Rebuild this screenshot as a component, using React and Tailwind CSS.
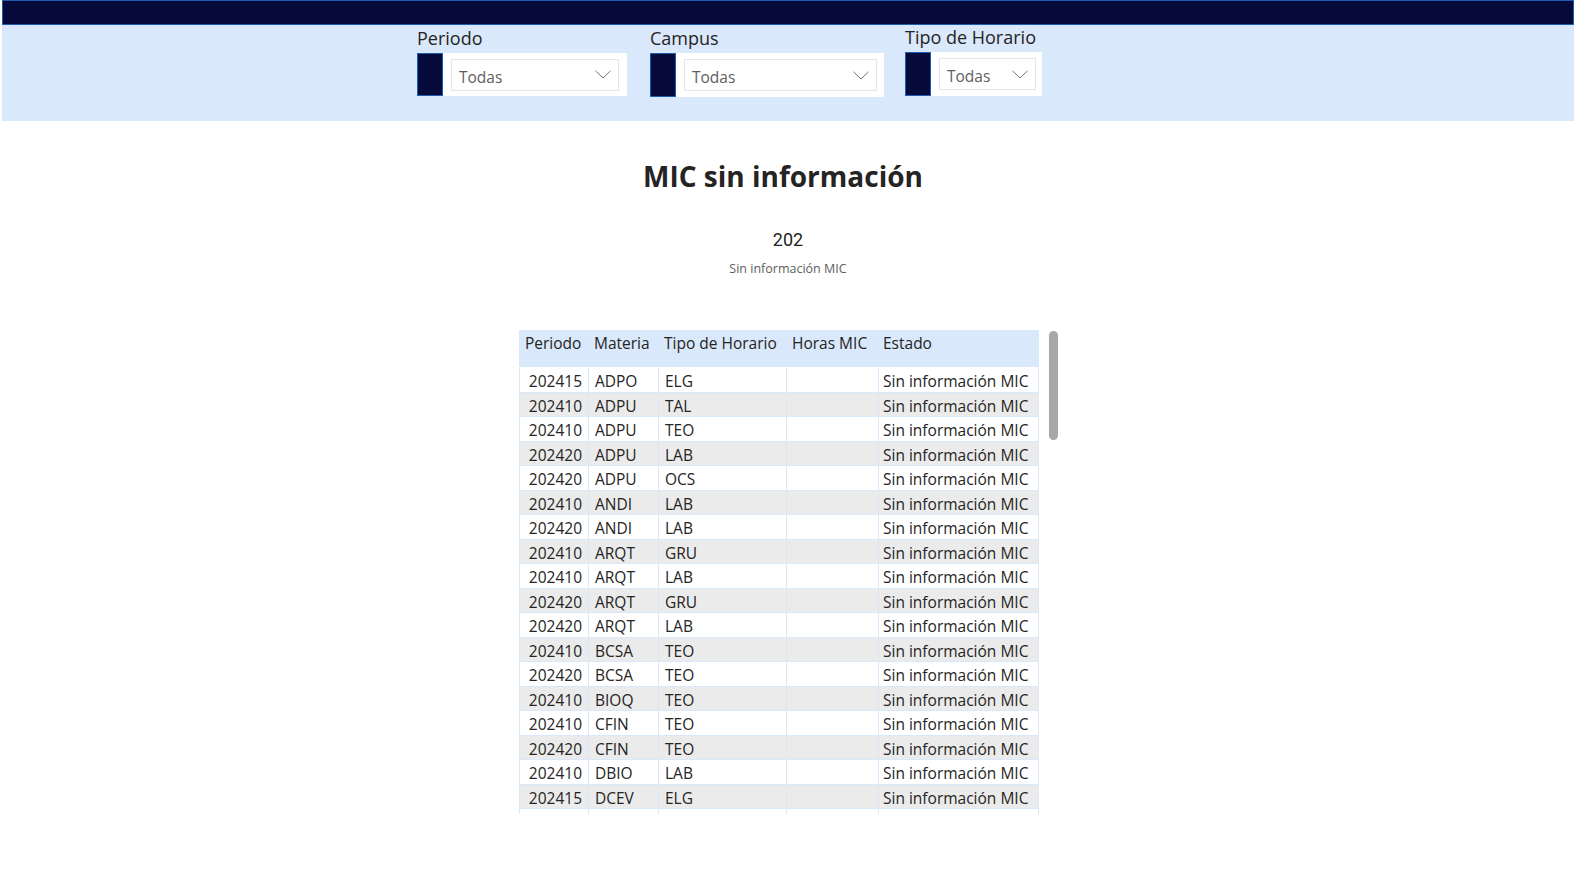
import React from 'react';

const rows = [
  ['202415', 'ADPO', 'ELG'],
  ['202410', 'ADPU', 'TAL'],
  ['202410', 'ADPU', 'TEO'],
  ['202420', 'ADPU', 'LAB'],
  ['202420', 'ADPU', 'OCS'],
  ['202410', 'ANDI', 'LAB'],
  ['202420', 'ANDI', 'LAB'],
  ['202410', 'ARQT', 'GRU'],
  ['202410', 'ARQT', 'LAB'],
  ['202420', 'ARQT', 'GRU'],
  ['202420', 'ARQT', 'LAB'],
  ['202410', 'BCSA', 'TEO'],
  ['202420', 'BCSA', 'TEO'],
  ['202410', 'BIOQ', 'TEO'],
  ['202410', 'CFIN', 'TEO'],
  ['202420', 'CFIN', 'TEO'],
  ['202410', 'DBIO', 'LAB'],
  ['202415', 'DCEV', 'ELG'],
  ['202420', 'DCEV', 'ELG'],
  ['202410', 'DERE', 'TEO'],
];

const Chevron = () => (
  <svg width="16" height="9" viewBox="0 0 16 9" fill="none" className="shrink-0">
    <path d="M0.5 0.8 L8 8 L15.5 0.8" stroke="#757371" strokeWidth="1" />
  </svg>
);

const Slicer = ({ label, boxW, inner, top }) => (
  <div className="flex flex-col">
    <div className="text-[18px] leading-[22px] text-[#252423]">{label}</div>
    <div className={`flex h-[43px] ${top}`}>
      <div className="w-[26px] h-full bg-[#050a3a] border border-[#1b5cae]" />
      <div className={`bg-white flex items-center pl-[8px] ${inner}`} style={{ width: boxW }}>
        <div className="flex-1 h-[32px] border border-[#e6e6e6] flex items-center justify-between pl-[7px] pr-[7px]">
          <span className="text-[15.5px] mt-[6px] text-[#605e5c]">Todas</span>
          <Chevron />
        </div>
      </div>
    </div>
  </div>
);

export default function App() {
  return (
    <div className="w-[1574px] h-[885px] bg-white overflow-hidden" style={{ fontFamily: '"Open Sans", "Noto Sans", sans-serif' }}>
      {/* top bar */}
      <div className="ml-[2px] h-[25px] bg-[#050a3a] border border-[#1b5cae]" />
      {/* filter band */}
      <div className="ml-[2px] h-[96px] bg-[#d9e8fa] flex pt-[2px]">
        <div className="ml-[415px] flex">
          <Slicer label="Periodo" boxW={184} inner="pr-[8px]" top="mt-[4px]" />
          <div className="ml-[23px]">
            <Slicer label="Campus" boxW={208} inner="pr-[7px]" top="mt-[4px] h-[44px]" />
          </div>
          <div className="ml-[21px] -mt-[1px]">
            <Slicer label="Tipo de Horario" boxW={111} inner="pr-[6px]" top="mt-[4px] h-[44px]" />
          </div>
        </div>
      </div>

      {/* title + card */}
      <div className="flex flex-col items-center">
        <h1 className="mt-[37px] text-[28px] leading-[36px] font-bold text-[#252423] -ml-[8px]">MIC sin información</h1>
        <div className="mt-[35px] text-[18px] leading-[22px] text-[#252423] ml-[2px]" style={{ fontFamily: 'Roboto, "Open Sans", sans-serif' }}>202</div>
        <div className="mt-[10px] text-[12.5px] leading-[16px] text-[#605e5c] ml-[2px]">Sin información MIC</div>
      </div>

      {/* table */}
      <div className="mt-[53px] ml-[519px] flex gap-[10px]">
        <div className="w-[520px] h-[484px] overflow-hidden text-[15.5px] text-[#252423]">
          <div className="flex h-[37px] bg-[#d9e8fa] border-b border-[#d9e8fa] pt-[2px]">
            <div className="w-[70px] pl-[6px]">Periodo</div>
            <div className="w-[70px] pl-[5px]">Materia</div>
            <div className="w-[128px] pl-[5px]">Tipo de Horario</div>
            <div className="w-[92px] pl-[5px]">Horas MIC</div>
            <div className="w-[160px] pl-[4px]">Estado</div>
          </div>
          <div className="h-[1px]" />
          {rows.map((r, i) => (
            <div key={i} className={`flex h-[24.5px] leading-[26px] border-b border-[#d9e8fa] ${i % 2 === 0 ? 'bg-white' : 'bg-[#ebebeb]'}`}>
              <div className="w-[70px] pr-[6px] text-right border-l border-r border-[#d9e8fa]">{r[0]}</div>
              <div className="w-[70px] pl-[6px] border-r border-[#d9e8fa]">{r[1]}</div>
              <div className="w-[128px] pl-[6px] border-r border-[#d9e8fa]">{r[2]}</div>
              <div className="w-[92px] border-r border-[#d9e8fa]" />
              <div className="w-[160px] pl-[4px] border-r border-[#d9e8fa] whitespace-nowrap">Sin información MIC</div>
            </div>
          ))}
        </div>
        <div className="w-[9px] h-[109px] mt-[1px] rounded-full bg-[#a8a8a8]" />
      </div>
    </div>
  );
}
